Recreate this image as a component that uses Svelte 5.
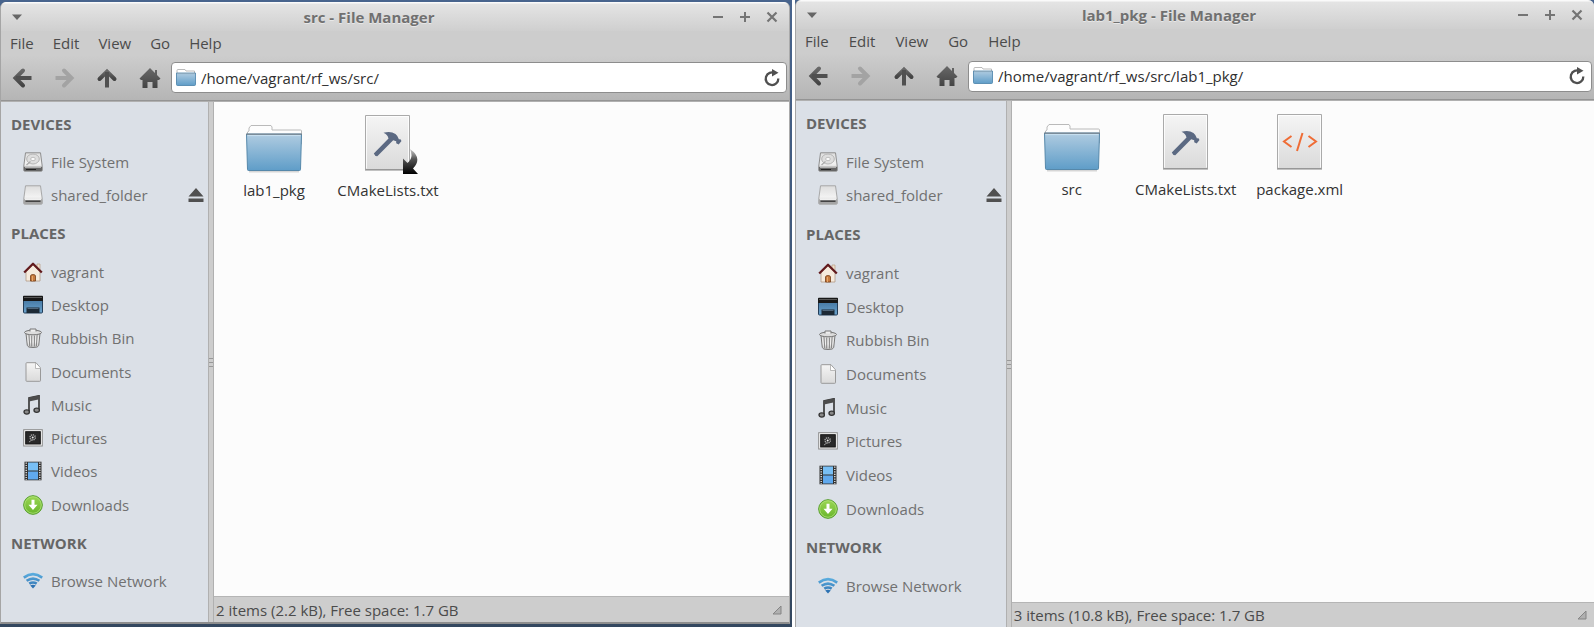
<script>
  const groups = [
    { title: 'Devices', items: [['disk', 'File System'], ['drive', 'shared_folder']] },
    {
      title: 'Places',
      items: [
        ['home', 'vagrant'],
        ['desktop', 'Desktop'],
        ['trash', 'Rubbish Bin'],
        ['document', 'Documents'],
        ['music', 'Music'],
        ['picture', 'Pictures'],
        ['video', 'Videos'],
        ['download', 'Downloads']
      ]
    },
    { title: 'Network', items: [['wifi', 'Browse Network']] }
  ];

  const windows = [
    {
      id: 'first',
      title: 'src - File Manager',
      path: '/home/vagrant/rf_ws/src/',
      status: '2 items (2.2 kB), Free space: 1.7 GB',
      files: [
        { icon: 'folder', name: 'lab1_pkg' },
        { icon: 'cmake', name: 'CMakeLists.txt', link: true }
      ]
    },
    {
      id: 'second',
      title: 'lab1_pkg - File Manager',
      path: '/home/vagrant/rf_ws/src/lab1_pkg/',
      status: '3 items (10.8 kB), Free space: 1.7 GB',
      files: [
        { icon: 'folder', name: 'src' },
        { icon: 'cmake', name: 'CMakeLists.txt' },
        { icon: 'xml', name: 'package.xml' }
      ]
    }
  ];
</script>

{#snippet smallIcon(name)}
  <svg class="small-icon" viewBox="0 0 20 20" width="20" height="20" aria-hidden="true">
    {#if name === 'disk'}
      <path d="M2.5.8h15l1.8 14v3.4q0 1-1 1H1.700q-1 0-1-1v-3.400z" fill="url(#metal)" stroke="#858585" stroke-width=".9" />
      <ellipse cx="10" cy="7" rx="6.300" ry="5" fill="#dedede" stroke="#b5b5b5" />
      <ellipse cx="10" cy="7" rx="2.300" ry="1.700" fill="#fafafa" stroke="#aaa" stroke-width=".7" />
      <path d="M3.500 13l4-3.500" stroke="#aaa" stroke-width="1.300" />
      <path d="M1 14.800h18v3.400q0 .8-1 .8H2q-1 0-1-.8z" fill="#666" />
      <path d="M2 15.300h16" stroke="#ddd" stroke-width=".8" />
      <path d="M3 17.500h10" stroke="#222" />
    {:else if name === 'drive'}
      <path d="M2.500.8h15l1.800 13.500v3.900q0 1-1 1H1.700q-1 0-1-1v-3.900z" fill="url(#metal)" stroke="#a0a0a0" stroke-width=".9" />
      <path d="M1 14.300h18v3.900q0 .8-1 .8H2q-1 0-1-.8z" fill="#a5a5a5" />
      <path d="M2.500 16.200h15" stroke="#444" stroke-width="1.400" />
      <path d="M2 14.300h16" stroke="#fff" />
    {:else if name === 'home'}
      <path d="M14 2h3v6h-3z" fill="#efe0cc" stroke="#b99c85" stroke-width=".7" />
      <path d="M3 9.500l7-7 7 7V19H3z" fill="#f6ebdd" stroke="#b39b86" stroke-width=".8" />
      <path d="M1.200 10.500L10 1.800l8.800 8.700" fill="none" stroke="#621a1d" stroke-width="2.300" stroke-linejoin="round" />
      <path d="M7.500 19v-5q0-1.500 2.500-1.500t2.500 1.500v5z" fill="#c77a3c" stroke="#743d18" stroke-width=".8" />
      <path d="M9.500 14v5" stroke="#e5a76d" />
    {:else if name === 'desktop'}
      <rect x=".5" y="1.500" width="19" height="16.500" rx="1" fill="url(#screen)" stroke="#233d58" />
      <path d="M0 1.500q0-.8.800-.8h18.400q.8 0 .8.800v4.500H0z" fill="#171717" />
      <path d="M1 2.500h18" stroke="#555" />
      <path d="M3.500 18v-5.500h13V18z" fill="#1c2935" />
      <path d="M4.500 13.500h11" stroke="#50667a" />
    {:else if name === 'trash'}
      <path d="M3 5.500h14l-1.300 12q-.2 2-5.700 2t-5.700-2z" fill="url(#metal)" stroke="#777" />
      <path d="M6 7l.7 11M8.700 7.500V18.500M11.400 7.500V18.500M14.100 7l-.7 11" stroke="#888" stroke-width="1.100" />
      <ellipse cx="10" cy="4.500" rx="8.500" ry="2.300" fill="#ddd" stroke="#747474" />
      <path d="M7 3.500V1h6v2.500" fill="#eee" stroke="#777" />
    {:else if name === 'document'}
      <path d="M3 1.500q0-.8.800-.8H13L17.500 6v12.700q0 .6-.8.600H3.800q-.8 0-.8-.6z" fill="url(#paper)" stroke="#999" />
      <path d="M12.500 1v5.500h5" fill="#fff" stroke="#aaa" stroke-width=".8" />
    {:else if name === 'music'}
      <path d="M6 17V3L16 .8V15" fill="none" stroke="#3b3b3b" stroke-width="1.700" />
      <path d="M6 2.500L16.500.3v4L6 6.500z" fill="#4c4c4c" />
      <ellipse cx="3.700" cy="17" rx="2.700" ry="2.100" fill="#888" stroke="#333" stroke-width="1.300" />
      <ellipse cx="13.700" cy="15.300" rx="2.700" ry="2.100" fill="#888" stroke="#333" stroke-width="1.300" />
    {:else if name === 'picture'}
      <rect x=".7" y="1.700" width="18.600" height="16.300" fill="#fafafa" stroke="#8b8b8b" />
      <rect x="2.700" y="3.700" width="14.600" height="12.300" fill="#292929" stroke="#161616" />
      <circle cx="9.700" cy="9.400" r="2.600" fill="none" stroke="#aaa" stroke-width="1.500" stroke-dasharray="1.200 .8" />
      <circle cx="9.700" cy="9.400" r="1" fill="#eee" />
      <path d="M9 11.500q-1 1.500-3 2.500" stroke="#999" fill="none" />
    {:else if name === 'video'}
      <rect x="1.500" y=".7" width="17" height="18.600" fill="#333" />
      <rect x="5" y="1.500" width="10" height="8" fill="#78bff5" />
      <rect x="5" y="10.500" width="10" height="8" fill="#60a9ee" />
      <path d="M3.200 1.500v17.500M16.800 1.500v17.500" stroke="#eee" stroke-width="1.300" stroke-dasharray="1.200 1.200" />
    {:else if name === 'download'}
      <circle cx="10" cy="10" r="9.300" fill="url(#green)" stroke="#4f9a23" />
      <circle cx="10" cy="10" r="8.300" fill="none" stroke="#b1e27c" stroke-width=".8" />
      <path d="M8.500 4.800h3v5h3L10 15l-4.500-5.200h3z" fill="#fff" />
    {:else if name === 'wifi'}
      <g fill="none" stroke="url(#blue)" stroke-width="2.600">
        <path d="M.8 6.600Q10-.2 19.200 6.600" />
        <path d="M3.600 9.800q6.400-4.500 12.800 0" />
        <path d="M6.300 12.700q3.700-2.500 7.400 0" />
      </g>
      <path d="M7.200 14.400q2.800-1.500 5.600 0L10 17.500z" fill="#2c72b3" />
    {:else if name === 'folder'}
      <path d="M1 15V2.500Q1 1.500 2 1.500h7l1 1.500h8.500v12z" fill="#fff" stroke="#aaa" stroke-width=".8" />
      <path d="M.5 5h19v11.500q0 1-1 1h-17q-1 0-1-1z" fill="url(#folder)" stroke="#4780a8" stroke-width=".8" />
      <path d="M1 5.600h18" stroke="#8da9bd" />
    {/if}
  </svg>
{/snippet}

{#snippet fileIcon(name, link)}
  <svg class="file-icon" viewBox="0 0 64 60" width="64" height="60" aria-hidden="true">
    {#if name === 'folder'}
      <path d="M7 57.500h50" stroke="#000" stroke-opacity=".15" stroke-width="2" />
      <path d="M5.500 30V18l1.500-1v-3l2-2.500h20l1 1.500v3h28.500q1 0 1 1V30z" fill="#fdfdfd" stroke="#bababa" />
      <path d="M4.500 20h55l-1 35.500q0 1-1 1h-51q-1 0-1-1z" fill="url(#folder)" stroke="#5688aa" />
      <path d="M4 20.200h56" stroke="#777f86" />
      <path d="M5.500 21.600h53" stroke="#c9e0f0" />
    {:else}
      <path d="M9.500 1.500h44v54h-44z" fill="url(#paper)" stroke="#aaa" />
      <path d="M9 56h45" stroke="#858585" />
      <path d="M10.500 54.500v-52h42v52" fill="none" stroke="#fff" stroke-opacity=".8" />
      {#if name === 'cmake'}
        <path d="M17.800 39.500L32.500 24.500Q31.500 20.500 27.500 18.800q7-2.300 12 1.200 2.500 2 3.500 5.500l1.200-.4 1.300 1.900-2.800 3.500-2.500-1.300v-2l-3-1L21.300 42.300q-2.500 0-3.500-2.800z" fill="#5b6982" />
      {:else}
        <path d="M23.500 23l-7.500 5.500 7.500 5.500M40.500 23l7.500 5.500-7.500 5.500" fill="none" stroke="#ef6c35" stroke-width="2" />
        <path d="M34.500 20L29 38" stroke="#ef6c35" stroke-width="2" />
      {/if}
    {/if}
    {#if link}
      <path d="M54 35q13 9 3 19.500l5 5.500H47V44.500l4.500 4.500Q58 44 54 35z" fill="url(#arrow)" />
    {/if}
  </svg>
{/snippet}

<svg class="paints" aria-hidden="true">
  <defs>
    <linearGradient id="metal" x2="0" y2="1"><stop stop-color="#ddd" /><stop offset=".6" stop-color="#f2f2f2" /><stop offset="1" stop-color="#c4c4c4" /></linearGradient>
    <linearGradient id="paper" x2="0" y2="1"><stop stop-color="#f5f5f5" /><stop offset="1" stop-color="#dadada" /></linearGradient>
    <linearGradient id="folder" x2="0" y2="1"><stop stop-color="#b0cce1" /><stop offset="1" stop-color="#5f9dc8" /></linearGradient>
    <linearGradient id="screen" x2="0" y2="1"><stop stop-color="#3d6e9a" /><stop offset="1" stop-color="#6ba3cc" /></linearGradient>
    <linearGradient id="green" x2="0" y2="1"><stop stop-color="#9bd755" /><stop offset="1" stop-color="#68b52b" /></linearGradient>
    <linearGradient id="blue" x2="0" y2="20" gradientUnits="userSpaceOnUse"><stop stop-color="#62b7e6" /><stop offset="1" stop-color="#2565a8" /></linearGradient>
    <linearGradient id="arrow" x2="0" y2="1"><stop stop-color="#ccc" /><stop offset=".4" stop-color="#555" /><stop offset="1" stop-color="#000" /></linearGradient>
    <linearGradient id="tool" x2="0" y2="1"><stop stop-color="#686868" /><stop offset="1" stop-color="#444" /></linearGradient>
  </defs>
</svg>

<main class="screens">
  {#each windows as win}
    <div class="screen {win.id}">
      <section class="window" aria-label={win.title}>
        <header class="titlebar">
          <button class="plain" aria-label="Window menu"><svg width="12" height="12" viewBox="0 0 12 12"><path d="M1 3.500h10L6 9z" fill="#666" /></svg></button>
          <h1>{win.title}</h1>
          <div class="controls">
            <button class="plain" aria-label="Minimise"><svg width="12" height="12" viewBox="0 0 12 12"><path d="M1 6h10" stroke="#747474" stroke-width="2" /></svg></button>
            <button class="plain" aria-label="Maximise"><svg width="12" height="12" viewBox="0 0 12 12"><path d="M1 6h10M6 1v10" stroke="#747474" stroke-width="2" /></svg></button>
            <button class="plain" aria-label="Close"><svg width="12" height="12" viewBox="0 0 12 12"><path d="M1.500 1.500l9 9M10.500 1.500l-9 9" stroke="#747474" stroke-width="2.200" /></svg></button>
          </div>
        </header>

        <nav class="menubar" aria-label="Menu">
          {#each ['File', 'Edit', 'View', 'Go', 'Help'] as item}
            <button class="plain">{item}</button>
          {/each}
        </nav>

        <div class="toolbar">
          <div class="nav">
            <button class="plain" aria-label="Back"><svg width="22" height="22" viewBox="0 0 22 22"><path d="M12 3.500L4.500 11l7.500 7.500" fill="none" stroke="url(#tool)" stroke-width="4" stroke-linecap="round" /><path d="M5 9h15.500v4H5z" fill="#505050" /></svg></button>
            <button class="plain" aria-label="Forward" disabled><svg width="22" height="22" viewBox="0 0 22 22"><path d="M10 3.500l7.500 7.500-7.500 7.500" fill="none" stroke="#a3a3a3" stroke-width="4" stroke-linecap="round" /><path d="M1.500 9H17v4H1.500z" fill="#a3a3a3" /></svg></button>
            <button class="plain" aria-label="Up"><svg width="22" height="22" viewBox="0 0 22 22"><path d="M3.500 12L11 4.500l7.500 7.500" fill="none" stroke="url(#tool)" stroke-width="4" stroke-linecap="round" /><path d="M9 5h4v15.500H9z" fill="#505050" /></svg></button>
            <button class="plain" aria-label="Home"><svg width="22" height="22" viewBox="0 0 22 22"><path d="M11 1l5 5V3h2v5l3.500 3.500L20 13h-1.500v8h-5v-6h-5v6h-5v-8H2L.5 11.500z" fill="url(#tool)" /></svg></button>
          </div>
          <div class="entry">
            {@render smallIcon('folder')}
            <input type="text" value={win.path} aria-label="Location" />
            <button class="plain" aria-label="Reload"><svg width="18" height="18" viewBox="0 0 18 18"><path d="M12 4.200A6.300 6.300 0 1 0 15.300 9.500" fill="none" stroke="#505050" stroke-width="2.300" /><path d="M9 0l6.500 3.700L9 7.500z" fill="#505050" /></svg></button>
          </div>
        </div>

        <div class="body">
          <aside class="sidebar">
            {#each groups as group}
              <h2>{group.title}</h2>
              {#each group.items as [icon, label]}
                <div class="place">
                  <button class="plain link">{@render smallIcon(icon)}<span>{label}</span></button>
                  {#if icon === 'drive'}
                    <button class="plain eject" aria-label="Eject"><svg width="16" height="16" viewBox="0 0 16 16"><path d="M8 1l7.500 8.500H.5zM.5 11.500h15V15H.5z" fill="#505050" /></svg></button>
                  {/if}
                </div>
              {/each}
            {/each}
          </aside>
          <div class="splitter"><i></i><i></i><i></i></div>
          <div class="content">
            <ul class="files">
              {#each win.files as file}
                <li><button class="plain file">{@render fileIcon(file.icon, file.link)}<span>{file.name}</span></button></li>
              {/each}
            </ul>
            <footer class="status">
              <span>{win.status}</span>
              <svg width="10" height="10" viewBox="0 0 10 10" aria-hidden="true"><path d="M1 9L9 1v8z" fill="#b0b0b0" stroke="#858585" /></svg>
            </footer>
          </div>
        </div>
      </section>
    </div>
  {/each}
</main>

<style>
  :global(body) {
    background: #fff;
  }
  .paints {
    position: absolute;
    width: 0;
    height: 0;
  }
  .screens {
    display: grid;
    grid-template-columns: 792fr 799fr;
    gap: 3px;
    min-height: 100vh;
    font: 15px/20px 'Open Sans', 'Noto Sans', sans-serif;
    color: #4b4b4b;
  }
  .screen {
    display: flex;
    background: linear-gradient(#48648d, #33475f);
  }
  .first {
    padding: 2px 2px 3px 0;
  }
  .window {
    flex: 1;
    min-width: 0;
    display: flex;
    flex-direction: column;
    box-sizing: border-box;
    background: #cdcdcd;
    border-left: 1px solid #a5a5a5;
    border-radius: 6px 6px 0 0;
    overflow: hidden;
  }
  .first .window {
    border-right: 1px solid #aaa;
    border-bottom: 2px solid #8d8d8d;
  }
  .plain {
    display: inline-flex;
    align-items: center;
    justify-content: center;
    padding: 0;
    border: 0;
    background: none;
    font: inherit;
    color: inherit;
  }
  .titlebar {
    display: flex;
    align-items: center;
    height: 29px;
    padding: 0 11px 0 10px;
    background: linear-gradient(#fafafa 0 1px, #e4e4e4 2px, #cfcfcf);
  }
  h1 {
    flex: 1;
    margin: 0 0 0 3px;
    text-align: center;
    font-size: 15px;
    line-height: 20px;
    font-weight: 700;
    color: #707070;
    text-shadow: 0 1px #e8e8e8;
  }
  .controls {
    display: flex;
    gap: 15px;
  }
  .menubar {
    display: flex;
    gap: 20px;
    padding: 2px 9px;
  }
  .first .menubar {
    gap: 19px;
  }
  .toolbar {
    display: flex;
    align-items: center;
    height: 46px;
    box-sizing: border-box;
    padding: 0 2px 0 0;
    background: linear-gradient(#cdcdcd, #b5b5b5);
    border-bottom: 1px solid #949494;
  }
  .second .toolbar {
    height: 47px;
  }
  .nav {
    width: 22%;
    flex: none;
    display: grid;
    grid-template-columns: repeat(4, 1fr);
    box-sizing: border-box;
    padding-right: 3px;
    margin-right: -3px;
  }
  .entry {
    flex: 1;
    min-width: 0;
    display: flex;
    align-items: center;
    gap: 5px;
    height: 31px;
    box-sizing: border-box;
    padding: 0 5px 0 4px;
    background: #fff;
    border: 1px solid #8d8d8d;
    border-radius: 4px;
  }
  input {
    flex: 1;
    min-width: 0;
    padding: 0;
    border: 0;
    outline: 0;
    background: none;
    font: inherit;
    color: #303030;
  }
  .body {
    flex: 1;
    display: flex;
    border-top: 1px solid #b0b0b0;
  }
  .sidebar {
    width: 26.4%;
    flex: none;
    display: flex;
    flex-direction: column;
    box-sizing: border-box;
    padding-bottom: 24px;
    background: #dbe0e7;
    border-right: 1px solid #b0b0b0;
    color: #717171;
  }
  h2 {
    flex: 13 0 26px;
    display: flex;
    align-items: center;
    margin: 0;
    padding-left: 10px;
    font-size: 15px;
    line-height: 20px;
    font-weight: 700;
    text-transform: uppercase;
    color: #666;
  }
  .place {
    flex: 10 0 20px;
    display: flex;
    align-items: center;
    justify-content: space-between;
    padding: 0 4px 0 22px;
  }
  .link {
    gap: 8px;
  }
  .small-icon {
    flex: none;
  }
  .splitter {
    width: 4px;
    display: flex;
    flex-direction: column;
    align-items: center;
    justify-content: center;
    gap: 3px;
    border-right: 1px solid #b0b0b0;
  }
  .splitter i {
    width: 4px;
    height: 1px;
    background: #999;
  }
  .content {
    flex: 1;
    min-width: 0;
    display: flex;
    flex-direction: column;
  }
  .files {
    flex: 1;
    display: flex;
    margin: 0;
    padding: 12px 3px;
    list-style: none;
    background: #fcfcfc;
    color: #333;
  }
  .files li {
    width: 114px;
  }
  .file {
    width: 100%;
    flex-direction: column;
    gap: 6px;
  }
  .status {
    display: flex;
    align-items: center;
    justify-content: space-between;
    height: 25px;
    padding: 0 7px 0 2px;
    border-top: 1px solid #b5b5b5;
  }
  .second .status {
    height: 24px;
  }
</style>
